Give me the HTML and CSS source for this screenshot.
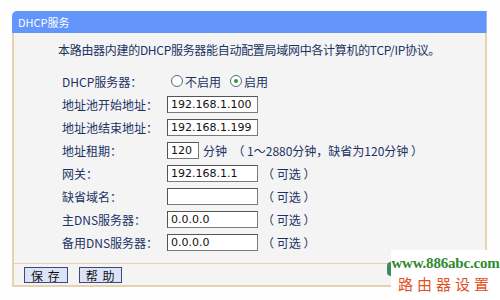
FILE: index.html
```html
<!DOCTYPE html>
<html>
<head>
<meta charset="utf-8">
<link rel="stylesheet" href="styles.css">
</head>
<body>
<div class="panel">
  <div class="head">DHCP服务</div>
  <div class="body">
    <p class="intro">本路由器内建的DHCP服务器能自动配置局域网中各计算机的TCP/IP协议。</p>
    <div class="form">
      <div class="row"><span class="lab">DHCP服务器：</span>
        <span class="radios"><span class="radio"></span>不启用<span class="radio on"></span>启用</span></div>
      <div class="row"><span class="lab">地址池开始地址：</span><span class="inp">192.168.1.100</span></div>
      <div class="row"><span class="lab">地址池结束地址：</span><span class="inp">192.168.1.199</span></div>
      <div class="row"><span class="lab">地址租期：</span><span class="inp short">120</span><span class="note">分钟&nbsp;&nbsp;（ 1～2880分钟，缺省为120分钟 ）</span></div>
      <div class="row"><span class="lab">网关：</span><span class="inp">192.168.1.1</span><span class="opt">（ 可选 ）</span></div>
      <div class="row"><span class="lab">缺省域名：</span><span class="inp"></span><span class="opt">（ 可选 ）</span></div>
      <div class="row"><span class="lab">主DNS服务器：</span><span class="inp">0.0.0.0</span><span class="opt">（ 可选 ）</span></div>
      <div class="row"><span class="lab">备用DNS服务器：</span><span class="inp">0.0.0.0</span><span class="opt">（ 可选 ）</span></div>
    </div>
  </div>
  <div class="foot"><span class="btn">保 存</span><span class="btn">帮 助</span></div>
</div>
<div class="mark">
  <span class="blob"></span>
  <div class="url">www.886abc.com</div>
  <div class="cn">路由器设置</div>
</div>
</body>
</html>
```
FILE: styles.css
```css
html, body { margin: 0; padding: 0; background: #fefefe; }
body {
  width: 500px; height: 300px; overflow: hidden; position: relative;
  font-family: "Noto Sans CJK SC", "DejaVu Sans", sans-serif;
  font-size: 12px; color: #1c3264;
  padding: 11px 0 0 12px; box-sizing: border-box;
}
.panel { width: 475px; }
.head {
  height: 22px; background: #6395fb; color: #fff;
  border-radius: 5px 0 0 0; padding-left: 6px;
  line-height: 22px; font-size: 11px;
  border-right: 1px solid #9ab8f0;
}
.body {
  background: #f4f4f4; border-left: 2px solid #e6d3ad; border-right: 2px solid #e6d3ad;
  height: 230px; box-sizing: border-box; padding-top: 8px;
}
.intro { margin: 0 0 0 44px; line-height: 18px; letter-spacing: -0.3px; }
.form { margin: 13px 0 0 48px; display: flex; flex-direction: column; gap: 5px; }
.row { display: flex; align-items: center; height: 18px; }
.lab { width: 105px; }
.inp {
  width: 91px; height: 17px; box-sizing: border-box; background: #fff;
  border: 1px solid #7a7a7a; border-top-color: #555; border-left-color: #555;
  font-family: "DejaVu Sans", sans-serif; font-size: 11px; line-height: 15px; padding-left: 3px;
  color: #111;
}
.inp.short { width: 32px; }
.note { margin-left: 4px; }
.opt { margin-left: 4px; }
.radios { display: flex; align-items: center; margin-left: 4px; }
.radio {
  width: 10px; height: 10px; border: 1px solid #4f6a8f; border-radius: 50%;
  margin-right: 2px; position: relative; background: #fff;
}
.radio.on { margin-left: 9px; }
.radio.on::after {
  content: ""; position: absolute; left: 3px; top: 3px; width: 4px; height: 4px;
  border-radius: 50%; background: #2e9a2e;
}
.foot {
  height: 24px; background: #f4f4f4; box-sizing: border-box;
  border: 2px solid #e6d3ad; border-top: 1px solid #e6d3ad;
  display: flex; align-items: center; gap: 11px; padding-left: 10px;
}
.btn {
  height: 16px; line-height: 15px; padding: 0 6px; box-sizing: border-box;
  background: #dde3f7; border: 1px solid #3a4a7a; color: #111; font-size: 12px;
  letter-spacing: 1px;
}
.mark {
  position: absolute; left: 391px; top: 250px; width: 109px; height: 50px;
  background: #fff; text-align: center;
}
.blob {
  position: absolute; left: -4px; top: 12px; width: 4px; height: 14px;
  border-radius: 7px 0 0 7px; background: #3e8a5a;
}
.url {
  font-family: "Liberation Serif", serif; font-weight: bold; color: #2f8a2f;
  font-size: 15px; margin-top: 5px; line-height: 16px; letter-spacing: -0.2px;
}
.cn {
  color: #e2521e; font-size: 15px; letter-spacing: 4px; margin-top: 4px; line-height: 18px;
  font-family: "Noto Sans CJK SC", sans-serif;
}
```
